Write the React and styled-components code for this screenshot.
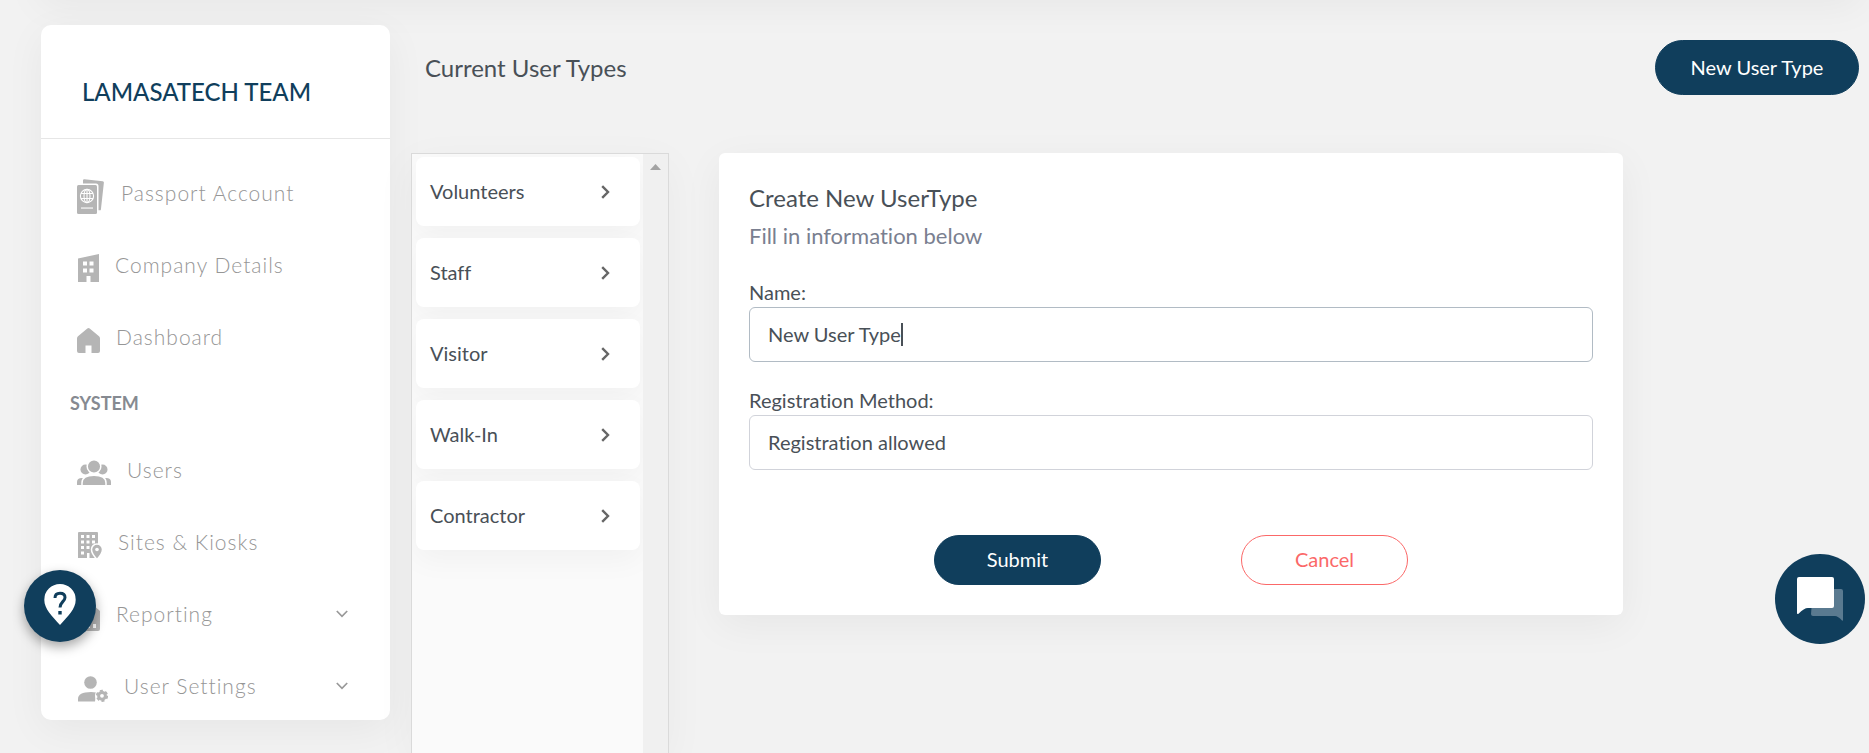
import React, { useLayoutEffect, useState } from 'react';

import styled, { createGlobalStyle } from 'styled-components';

const navy = '#103e5c';
const grey = '#b5b5b5';

const GlobalStyle = createGlobalStyle`
    * {
        box-sizing: border-box;
    }
    body {
        background-color: #f2f2f2;
        color: #495057;
        font-family: Lato, sans-serif;
        font-size: 20px;
        font-variant-ligatures: no-common-ligatures;
        line-height: 24px;
        margin: 0;
        overflow: hidden;
    }
    button, input, select {
        color: inherit;
        font: inherit;
        font-variant-ligatures: inherit;
    }
`;

const Page = styled.div`
    display: flex;
    flex-direction: column;
    height: 100vh;
    overflow: hidden;
`;

/* scrolled out of view, only its shadow reaches the page */
const TopBar = styled.header`
    box-shadow: 0 5px 40px rgba(0, 0, 0, 0.05);
    flex: none;
    height: 60px;
    margin: -60px 8px 0 40px;
`;

const Body = styled.div`
    display: flex;
    flex: 1;
    gap: 21px;
    min-height: 0;
    padding: 25px 10px 0 41px;
`;

const Sidebar = styled.aside`
    align-self: flex-start;
    background-color: white;
    border-radius: 10px;
    box-shadow: 0 10px 40px rgba(0, 0, 0, 0.05);
    flex: none;
    width: 349px;
`;

const Team = styled.h1`
    border-bottom: 1px solid #e6e6e6;
    color: ${navy};
    font-size: 24px;
    font-weight: 500;
    line-height: 28px;
    margin: 0;
    padding: 53px 41px 32px;
`;

const Nav = styled.nav`
    display: flex;
    flex-direction: column;
    gap: 10px;
    padding-top: 26px;
`;

const NavLink = styled.a`
    align-items: center;
    color: #969696;
    display: flex;
    font-size: 21px;
    font-weight: 300;
    gap: 16px;
    height: 62px;
    letter-spacing: 1px;
    padding: 0 42px 0 36px;
    text-decoration: none;

    svg {
        flex: none;
    }
`;

const NavText = styled.span`
    align-items: center;
    display: flex;
    flex: 1;
    justify-content: space-between;
    padding-bottom: 6px;
`;

const Section = styled.h2`
    color: #868a91;
    font-size: 18px;
    font-weight: 700;
    line-height: 44px;
    margin: 0 0 7px;
    padding-left: 29px;
`;

const Main = styled.main`
    display: flex;
    flex: 1;
    flex-direction: column;
    min-width: 0;
`;

const MainHeader = styled.div`
    align-items: center;
    display: flex;
    height: 85px;
    justify-content: space-between;
    margin-bottom: 43px;
    padding-left: 14px;
`;

const Title = styled.h2`
    font-size: 24px;
    font-weight: 400;
    line-height: 30px;
    margin: 0;
`;

const Button = styled.button`
    background-color: ${(props) => (props.$outline ? 'white' : navy)};
    border: 1px solid ${(props) => (props.$outline ? '#fb6868' : navy)};
    border-radius: 28px;
    color: ${(props) => (props.$outline ? '#fb6868' : 'white')};
    cursor: pointer;
    height: ${(props) => (props.$large ? 55 : 50)}px;
    padding: 0 0 2px;
    width: ${(props) => (props.$large ? 204 : 167)}px;
`;

const Columns = styled.div`
    display: flex;
    flex: 1;
    gap: 50px;
    min-height: 0;
`;

const TypeList = styled.div`
    background-color: #fafafa;
    border: 1px solid #dadada;
    border-bottom: 0;
    box-shadow: 0 10px 40px rgba(0, 0, 0, 0.04);
    display: flex;
    flex: none;
    width: 258px;
`;

const Types = styled.ul`
    display: flex;
    flex: 1;
    flex-direction: column;
    gap: 12px;
    list-style: none;
    margin: 0;
    overflow: hidden;
    padding: 3px 3px 0 4px;
`;

const TypeButton = styled.button`
    align-items: center;
    background-color: white;
    border: 0;
    border-radius: 8px;
    box-shadow: 0 10px 30px rgba(0, 0, 0, 0.04);
    cursor: pointer;
    display: flex;
    height: 69px;
    justify-content: space-between;
    padding: 0 30px 0 14px;
    width: 100%;
`;

const TypeName = styled.span`
    padding-bottom: 2px;
`;

const ScrollTrack = styled.div`
    background-color: #f0f0f0;
    display: flex;
    justify-content: center;
    padding-top: 10px;
    width: 25px;
`;

const Card = styled.form`
    align-self: flex-start;
    background-color: white;
    border-radius: 6px;
    box-shadow: 0 10px 40px rgba(0, 0, 0, 0.05);
    flex: 1;
    margin-right: 236px;
    padding: 30px;
`;

const Subtitle = styled.p`
    color: #7a7f90;
    font-size: 22px;
    line-height: 28px;
    margin: 9px 0 29px;
`;

const Field = styled.div`
    display: flex;
    flex-direction: column;
    margin-bottom: 25px;
`;

const Label = styled.label`
    line-height: 26px;
    padding-bottom: 2px;
`;

const InputBox = styled.div`
    position: relative;
`;

const Input = styled.input`
    appearance: none;
    background-color: white;
    border: 1px solid ${(props) => (props.$active ? '#b1bbc4' : '#d1d3da')};
    border-radius: 6px;
    caret-color: transparent;
    display: block;
    height: 55px;
    outline: none;
    padding: 0 18px 2px;
    width: 100%;
`;

const Caret = styled.span`
    background-color: #495057;
    height: 23px;
    pointer-events: none;
    position: absolute;
    top: 16px;
    width: 2px;
`;

const Actions = styled.div`
    display: flex;
    gap: 140px;
    justify-content: center;
    padding-top: 40px;
`;

const Floating = styled.button`
    align-items: center;
    background-color: ${navy};
    border: 0;
    border-radius: 50%;
    cursor: pointer;
    display: flex;
    justify-content: center;
    padding: 0;
    position: fixed;
`;

const HelpButton = styled(Floating)`
    bottom: 111px;
    box-shadow: 0 5px 12px rgba(0, 0, 0, 0.35);
    height: 72px;
    left: 24px;
    padding-bottom: 2px;
    width: 72px;
`;

const ChatButton = styled(Floating)`
    bottom: 109px;
    height: 90px;
    right: 4px;
    width: 90px;
`;

const PassportIcon = () => (
    <svg width="28" height="35" viewBox="0 0 28 35" fill={grey}>
        <path d="M6 4.500V1.200Q6.200 0 7.400.2L25.700 2.200Q27 2.400 26.900 3.600L23.900 30.400Q23.800 31.300 22.800 31.300H21.500V7Q21.500 4.500 19 4.500Z" />
        <rect y="6" width="20" height="29" rx="1.500" />
        <g fill="none" stroke="white" strokeWidth="1.100">
            <circle cx="10" cy="17" r="6.600" />
            <ellipse cx="10" cy="17" rx="3" ry="6.600" />
            <path d="M4 14.500H16M4 19.500H16M10 10.400V23.600" />
        </g>
        <path d="M4 28.500H16V29.600H4Z" fill="white" />
    </svg>
);

const CompanyIcon = () => (
    <svg width="22" height="28" viewBox="0 0 22 28" fill={grey}>
        <path fillRule="evenodd" d="M1 4.500L22 0V28H13.500V22H9.500V28H1ZM6 7.500V11.500H10V7.500ZM12.500 7.500V11.500H16.500V7.500ZM6 14.500V18.500H10V14.500ZM12.500 14.500V18.500H16.500V14.500Z" />
    </svg>
);

const HomeIcon = () => (
    <svg width="23" height="25" viewBox="0 0 23 25" fill={grey}>
        <path d="M10.300.5Q11.500-.4 12.700.5L22 8.300Q23 9.200 23 10.500V23Q23 25 21 25H14.500V17.500H8.500V25H2Q0 25 0 23V10.500Q0 9.200 1 8.300Z" />
    </svg>
);

const UsersIcon = () => (
    <svg width="34" height="26" viewBox="0 0 34 26" fill={grey}>
        <circle cx="8.500" cy="9.500" r="5" />
        <circle cx="25.500" cy="9.500" r="5" />
        <path d="M0 25V22Q0 18 5 18H29Q34 18 34 22V25Z" />
        <g stroke="white" strokeWidth="1.500">
            <circle cx="17" cy="6.500" r="6.800" />
            <path d="M5 26V23Q5 15.300 17 15.300T29 23V26Z" />
        </g>
        <path fill="white" d="M0 25H34V26H0Z" />
    </svg>
);

const SitesIcon = () => (
    <svg width="25" height="27" viewBox="0 0 25 27" fill={grey}>
        <path d="M1 1Q1 0 2 0H20Q21 0 21 1V26H1Z" />
        <path fill="white" d="M4 3H7V6H4ZM9.500 3H12.500V6H9.500ZM15 3H18V6H15ZM4 8.500H7V11.500H4ZM9.500 8.500H12.500V11.500H9.500ZM15 8.500H18V11.500H15ZM4 14H7V17H4ZM9.500 14H12.500V17H9.500ZM4 19.500H7V22.500H4ZM10 21H12.500V26H10Z" />
        <path stroke="white" strokeWidth="1.500" d="M20 27.500Q14.500 21.500 14.500 17.500A5.500 5.500 0 0 1 25.500 17.500Q25.500 21.500 20 27.500Z" />
        <circle cx="20" cy="17.500" r="1.800" fill="white" />
    </svg>
);

const ReportIcon = () => (
    <svg width="23" height="27" viewBox="0 0 23 27" fill={grey}>
        <path d="M2 0H15L23 7V25Q23 27 21 27H2Q0 27 0 25V2Q0 0 2 0Z" />
        <path fill="white" d="M4.500 14H7.500V24H4.500ZM10 17H13V24H10ZM16 20H19V24H16Z" />
    </svg>
);

const UserSettingsIcon = () => (
    <svg width="31" height="26" viewBox="0 0 31 26" fill={grey}>
        <circle cx="13.500" cy="6.500" r="6.300" />
        <path d="M1 25.500V23Q1 16 14 16Q17 16 19 16.500L18 25.500Z" />
        <circle cx="25" cy="19.800" r="7" fill="white" />
        <circle cx="25" cy="19.800" r="3.400" fill="none" stroke={grey} strokeWidth="3" />
        <circle cx="25" cy="19.800" r="5.200" fill="none" stroke={grey} strokeWidth="1.800" strokeDasharray="3 2.440" />
    </svg>
);

const ChevronDown = () => (
    <svg width="12" height="8" viewBox="0 0 12 8" fill="none" stroke="#999" strokeWidth="1.700">
        <path d="M.8 1L6 6.300L11.200 1" />
    </svg>
);

const ChevronRight = () => (
    <svg width="9" height="14" viewBox="0 0 9 14" fill="none" stroke="#666" strokeWidth="2.400">
        <path d="M1.200 1.200L7 7L1.200 12.800" />
    </svg>
);

function NavItem({ icon: Icon, title, expandable }) {
    return (
        <NavLink href="#">
            <Icon />
            <NavText>
                {title}
                {expandable && <ChevronDown />}
            </NavText>
        </NavLink>
    );
}

function NameField() {
    const [name, setName] = useState('New User Type');
    const [textWidth, setTextWidth] = useState(0);

    useLayoutEffect(() => {
        const context = document.createElement('canvas').getContext('2d');
        context.font = '20px Lato';
        setTextWidth(Math.round(context.measureText(name).width));
    }, [name]);

    return (
        <Field>
            <Label htmlFor="name">Name:</Label>
            <InputBox>
                <Input
                    id="name"
                    value={name}
                    onChange={(ev) => setName(ev.target.value)}
                    autoFocus
                    $active
                />
                <Caret style={{ left: 18 + textWidth }} />
            </InputBox>
        </Field>
    );
}

const types = ['Volunteers', 'Staff', 'Visitor', 'Walk-In', 'Contractor'];

function App() {
    return (
        <Page>
            <GlobalStyle />
            <TopBar />
            <Body>
                <Sidebar>
                    <Team>LAMASATECH TEAM</Team>
                    <Nav>
                        <NavItem icon={PassportIcon} title="Passport Account" />
                        <NavItem icon={CompanyIcon} title="Company Details" />
                        <NavItem icon={HomeIcon} title="Dashboard" />
                        <Section>SYSTEM</Section>
                        <NavItem icon={UsersIcon} title="Users" />
                        <NavItem icon={SitesIcon} title="Sites &amp; Kiosks" />
                        <NavItem icon={ReportIcon} title="Reporting" expandable />
                        <NavItem icon={UserSettingsIcon} title="User Settings" expandable />
                    </Nav>
                </Sidebar>
                <Main>
                    <MainHeader>
                        <Title>Current User Types</Title>
                        <Button type="button" $large>New User Type</Button>
                    </MainHeader>
                    <Columns>
                        <TypeList>
                            <Types>
                                {types.map((type) => (
                                    <li key={type}>
                                        <TypeButton type="button">
                                            <TypeName>{type}</TypeName>
                                            <ChevronRight />
                                        </TypeButton>
                                    </li>
                                ))}
                            </Types>
                            <ScrollTrack>
                                <svg width="11" height="6" viewBox="0 0 11 6" fill="#a3a3a3">
                                    <path d="M5.500 0L11 6H0Z" />
                                </svg>
                            </ScrollTrack>
                        </TypeList>
                        <Card onSubmit={(ev) => ev.preventDefault()}>
                            <Title>Create New UserType</Title>
                            <Subtitle>Fill in information below</Subtitle>
                            <NameField />
                            <Field>
                                <Label htmlFor="method">Registration Method:</Label>
                                <Input as="select" id="method">
                                    <option>Registration allowed</option>
                                </Input>
                            </Field>
                            <Actions>
                                <Button type="submit">Submit</Button>
                                <Button type="button" $outline>Cancel</Button>
                            </Actions>
                        </Card>
                    </Columns>
                </Main>
            </Body>
            <HelpButton type="button" aria-label="Help">
                <svg width="32" height="42" viewBox="0 0 32 42">
                    <path fill="white" d="M16 0A15.700 15.700 0 0 1 31.700 15.700C31.700 25 24 32 16 41C8 32 .3 25 .3 15.700A15.700 15.700 0 0 1 16 0Z" />
                    <path fill="none" stroke={navy} strokeWidth="3" d="M11 14Q11 9.300 16 9.300T21 13.500C21 17.500 16 18 16 23.500" />
                    <path fill={navy} d="M14.300 27H17.700V30.500H14.300Z" />
                </svg>
            </HelpButton>
            <ChatButton type="button" aria-label="Chat">
                <svg width="46" height="44" viewBox="0 0 46 44">
                    <path fill="#5a7a90" d="M16 12H44Q46 12 46 14V43Q46 44 45 43.500Q41 39 38 39H16Q14 39 14 37Z" />
                    <path fill="white" d="M2 0H35Q37 0 37 2V29Q37 31 35 31H11Q7 31 1.500 36.700Q0 37.500 0 36V2Q0 0 2 0Z" />
                </svg>
            </ChatButton>
        </Page>
    );
}

export default App;
